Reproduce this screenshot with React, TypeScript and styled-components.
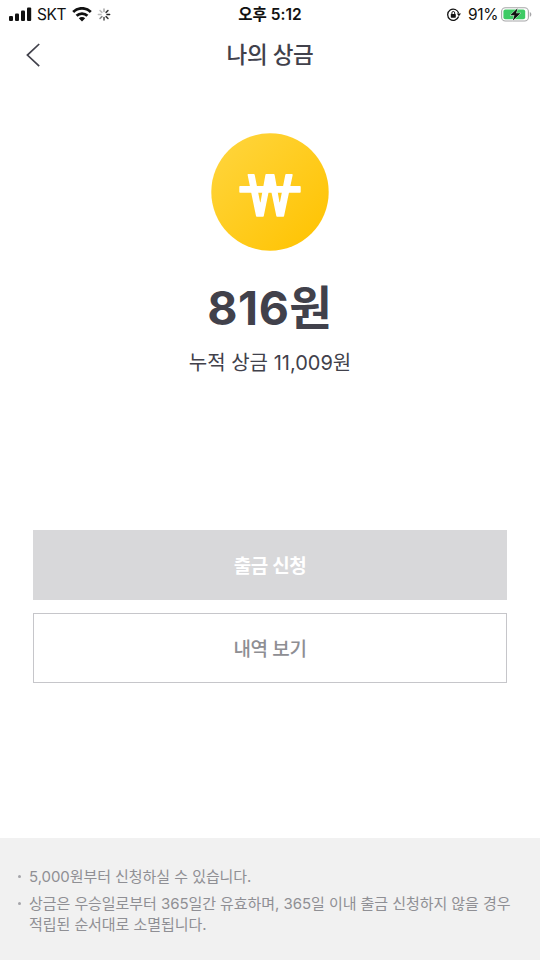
import React from 'react';
import styled, { createGlobalStyle } from 'styled-components';

const GlobalStyle = createGlobalStyle`
  * { box-sizing: border-box; }
  body {
    margin: 0;
    background: #fff;
    font-family: Inter, "Noto Sans CJK KR", sans-serif;
    color: #41414b;
  }
  button { font-family: inherit; cursor: pointer; }
`;

const Screen = styled.main`
  display: flex;
  flex-direction: column;
  width: 540px;
  height: 960px;
  overflow: hidden;
  background: #fff;
`;

const StatusBar = styled.div`
  display: grid;
  grid-template-columns: 1fr auto 1fr;
  align-items: center;
  height: 28px;
  padding: 0 7px 0 9px;
  color: #111;
  font-size: 15.5px;
  line-height: 28px;
`;

const StatusGroup = styled.div<{ $end?: boolean }>`
  display: flex;
  align-items: center;
  height: 28px;
  justify-content: ${({ $end }) => ($end ? 'flex-end' : 'flex-start')};
  svg { display: block; flex: none; }
`;

const Carrier = styled.span`
  margin: 0 6px 0 5px;
  letter-spacing: -0.4px;
`;

const Clock = styled.time`
  margin-right: 2px;
  font-size: 15.5px;
  font-weight: 600;
  line-height: 30px;
`;

const Percent = styled.span`
  margin: 0 3px 0 7px;
  letter-spacing: -0.4px;
`;

const Header = styled.header`
  display: grid;
  grid-template-columns: 60px 1fr 60px;
  align-items: center;
  height: 54px;
`;

const BackButton = styled.button`
  display: flex;
  padding: 0 0 0 25px;
  border: 0;
  background: none;
`;

const Title = styled.h1`
  margin: 0;
  font-size: 22.5px;
  font-weight: 500;
  line-height: 54px;
  text-align: center;
  letter-spacing: -0.4px;
`;

const Summary = styled.section`
  display: flex;
  flex-direction: column;
  align-items: center;
  height: 448px;
  padding-top: 51px;
`;

const Balance = styled.strong`
  margin-top: 25px;
  font-size: 46.5px;
  font-weight: 700;
  line-height: 64px;
  letter-spacing: 0.5px;
`;

const Total = styled.p`
  margin: 8px 0 0;
  font-size: 20px;
  line-height: 30px;
`;

const Actions = styled.div`
  display: flex;
  flex-direction: column;
  gap: 13px;
  padding: 0 33px;
`;

const ActionButton = styled.button<{ $outlined?: boolean }>`
  height: 70px;
  padding: ${({ $outlined }) => ($outlined ? '0 0 1px' : '0 0 2px')};
  border: ${({ $outlined }) => ($outlined ? '1px solid #c6c6ca' : '0')};
  background: ${({ $outlined }) => ($outlined ? '#fff' : '#d8d8da')};
  color: ${({ $outlined }) => ($outlined ? '#8e8e93' : '#fff')};
  font-size: 19px;
  font-weight: ${({ $outlined }) => ($outlined ? 500 : 600)};
  letter-spacing: -0.4px;
`;

const Notice = styled.ul`
  flex: none;
  height: 122px;
  margin: auto 0 0;
  padding: 28px 18px 0;
  background: #f1f1f1;
  color: #8f8f94;
  list-style: none;
`;

const NoticeItem = styled.li`
  display: flex;
  margin-bottom: 6px;
  font-size: 15px;
  line-height: 21px;
  letter-spacing: -0.06px;
  white-space: nowrap;
`;

const Bullet = styled.span`
  flex: none;
  width: 3px;
  height: 3px;
  margin: 9px 8px 0 0;
  border-radius: 50%;
  background: #a5a5aa;
`;

const SignalIcon = () => (
  <svg width="23" height="16" viewBox="0 0 23 16" fill="#111">
    <rect x="0" y="9" width="4" height="5" rx="1.1" />
    <rect x="6" y="6.5" width="4" height="7.5" rx="1.1" />
    <rect x="12" y="3.5" width="4" height="10.5" rx="1.1" />
    <rect x="18" y="0.4" width="4.2" height="13.6" rx="1.1" />
  </svg>
);

const WifiIcon = () => (
  <svg width="20" height="16" viewBox="0 0 20 16" fill="none" stroke="#111" strokeWidth="2.8">
    <path d="M1.2 4.9a12.6 12.6 0 0 1 17.6 0" />
    <path d="M4.6 8.8a7.6 7.6 0 0 1 10.8 0" />
    <path d="M10 14.6 6.8 11.3a4.5 4.5 0 0 1 6.4 0Z" fill="#111" stroke="none" />
  </svg>
);

const SpinnerSvg = styled.svg`
  margin-left: 5px;
`;

const spokes = [0.4, 0.9, 1, 0.9, 0.8, 0.55, 0.3, 0.3];

const Spinner = () => (
  <SpinnerSvg width="14" height="14" viewBox="-7 -6.5 14 14" stroke="#222" strokeWidth="1.5" strokeLinecap="round">
    {spokes.map((opacity, i) => (
      <path key={i} d="M0-3V-5.6" opacity={opacity} transform={`rotate(${i * 45})`} />
    ))}
  </SpinnerSvg>
);

const RotationLockIcon = () => (
  <svg width="15" height="14" viewBox="0 0.3 15 14" fill="none" stroke="#111" strokeWidth="1.3">
    <path d="M12.6 8.8A5.6 5.6 0 1 1 12.7 5.6" />
    <path d="M10.8 5.8h4.2l-2.1 2.8Z" fill="#111" stroke="none" />
    <rect x="4.8" y="6.2" width="5" height="3.8" rx=".6" fill="#111" stroke="none" />
    <path d="M5.9 6.4V5.2a1.4 1.4 0 0 1 2.8 0v1.2" strokeWidth="1" />
  </svg>
);

const BatteryIcon = () => (
  <svg width="32" height="16" viewBox="0 0 32 16">
    <rect x=".6" y=".8" width="26.8" height="13.2" rx="3.8" fill="#fff" stroke="#a6a6a8" strokeWidth="1.1" />
    <rect x="2.4" y="2.6" width="21.8" height="9.6" rx="2" fill="#3ecb65" />
    <path d="M28.8 4.9v4.8c2.1-.7 2.1-4.1 0-4.8Z" fill="#a6a6a8" />
    <path
      d="M16.6 1.3 9.2 8.3h4.3l-1.8 5.4 7.8-7.4h-4.4Z"
      fill="#111"
      stroke="#fff"
      strokeWidth="0.8"
      paintOrder="stroke"
    />
  </svg>
);

const BackIcon = () => (
  <svg width="16" height="24" viewBox="0 0 16 24" fill="none" stroke="#41414b" strokeWidth="1.7">
    <path d="M14.2 1 2.4 12.1 14.2 23.2" />
  </svg>
);

const CoinIcon = () => (
  <svg width="118" height="118" viewBox="0 0 118 118">
    <defs>
      <linearGradient id="coin" x1="0.15" y1="0.15" x2="0.85" y2="0.85">
        <stop offset="0" stopColor="#ffd336" />
        <stop offset="1" stopColor="#ffc508" />
      </linearGradient>
    </defs>
    <circle cx="59" cy="59" r="58.7" fill="url(#coin)" />
    <g fill="#fff" stroke="#fff" strokeWidth="1.6" strokeLinejoin="round">
      <path d="M37.4 41.8H42.9L48.4 70H50.2L55.2 41.8H62.8L67.8 70H69.6L75.1 41.8H80.9L72.3 82.9H66.1L60.6 56H57.4L52 82.9H45.8Z" />
      <path d="M29.1 53.8H88.9V58.9H29.1Z" />
    </g>
  </svg>
);

const notices = [
  ['5,000원부터 신청하실 수 있습니다.'],
  ['상금은 우승일로부터 365일간 유효하며, 365일 이내 출금 신청하지 않을 경우', '적립된 순서대로 소멸됩니다.'],
];

export default function App() {
  return (
    <Screen>
      <GlobalStyle />
      <StatusBar>
        <StatusGroup>
          <SignalIcon />
          <Carrier>SKT</Carrier>
          <WifiIcon />
          <Spinner />
        </StatusGroup>
        <Clock>오후 5:12</Clock>
        <StatusGroup $end>
          <RotationLockIcon />
          <Percent>91%</Percent>
          <BatteryIcon />
        </StatusGroup>
      </StatusBar>
      <Header>
        <BackButton aria-label="뒤로">
          <BackIcon />
        </BackButton>
        <Title>나의 상금</Title>
      </Header>
      <Summary>
        <CoinIcon />
        <Balance>816원</Balance>
        <Total>누적 상금 11,009원</Total>
      </Summary>
      <Actions>
        <ActionButton>출금 신청</ActionButton>
        <ActionButton $outlined>내역 보기</ActionButton>
      </Actions>
      <Notice>
        {notices.map((lines) => (
          <NoticeItem key={lines[0]}>
            <Bullet />
            <span>
              {lines.map((line) => (
                <div key={line}>{line}</div>
              ))}
            </span>
          </NoticeItem>
        ))}
      </Notice>
    </Screen>
  );
}
